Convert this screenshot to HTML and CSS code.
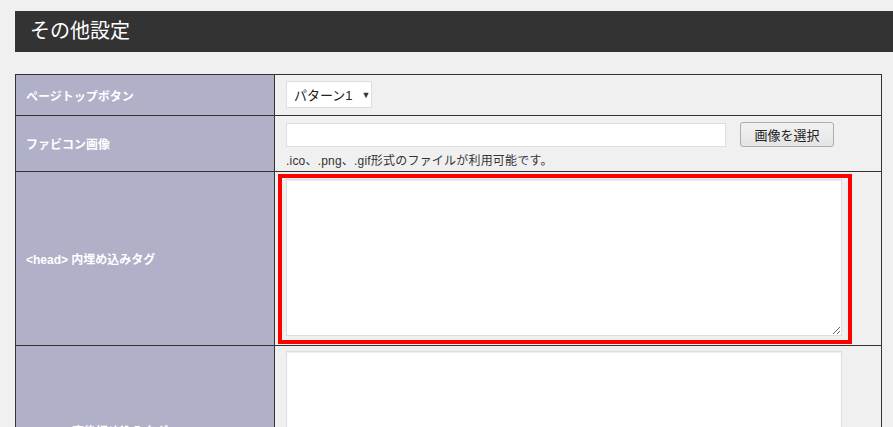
FILE: index.html
```html
<!DOCTYPE html>
<html lang="ja">
<head>
  <meta charset="UTF-8">
  <title>その他設定</title>
  <link rel="stylesheet" href="styles.css">
</head>
<body>

  <div class="settings">
    <!-- Section title bar -->
    <h2 class="section-title">その他設定</h2>

    <table class="form-table">
      <tr class="row-pagetop">
        <th>ページトップボタン</th>
        <td>
          <div class="select-box">
            <span class="select-text">パターン1</span>
            <span class="select-arrow">▼</span>
          </div>
        </td>
      </tr>
      <tr class="row-favicon">
        <th>ファビコン画像</th>
        <td>
          <div class="file-line">
            <input type="text" class="text-input">
            <button type="button" class="pick-btn">画像を選択</button>
          </div>
          <p class="help">.ico、.png、.gif形式のファイルが利用可能です。</p>
        </td>
      </tr>
      <tr class="row-head">
        <th>&lt;head&gt; 内埋め込みタグ</th>
        <td class="marked">
          <textarea class="code-area"></textarea>
          <!-- red annotation box drawn over the field -->
          <div class="highlight"></div>
        </td>
      </tr>
      <tr class="row-body">
        <th>&lt;body&gt; 直後埋め込みタグ</th>
        <td>
          <textarea class="code-area"></textarea>
        </td>
      </tr>
    </table>
  </div>

</body>
</html>
```

FILE: styles.css
```css
/* Page base */
body {
  margin: 0;
  padding: 0;
  background-color: #f0f0f0;
  font-family: "Liberation Sans", "Noto Sans CJK JP", sans-serif;
  color: #333;
  overflow: hidden;
}

.settings {
  padding: 11px 0 0 15px;
}

/* Dark title bar */
.section-title {
  margin: 0;
  height: 41px;
  line-height: 41px;
  padding-left: 15px;
  background-color: #333;
  color: #fff;
  font-size: 20px;
  font-weight: normal;
}

/* Settings table */
.form-table {
  margin-top: 22px;
  width: 867px;
  border-collapse: collapse;
}

.form-table th,
.form-table td {
  border: 1px solid #333;
}

.form-table th {
  width: 238px;
  padding: 0 10px;
  background-color: #b0b0c8;
  color: #fff;
  font-size: 12px;
  font-weight: bold;
  text-align: left;
  vertical-align: middle;
}

.form-table td {
  padding: 0 0 0 11px;
  vertical-align: top;
}

.row-pagetop { height: 41px; }
.row-favicon { height: 56px; }
.row-head    { height: 174px; }
.row-body    { height: 170px; }

/* Fake select */
.select-box {
  display: flex;
  align-items: center;
  gap: 9px;
  box-sizing: border-box;
  width: 86px;
  height: 27px;
  margin-top: 6px;
  padding-left: 7px;
  background: #fff;
  border: 1px solid #ddd;
  font-size: 13px;
  color: #222;
  white-space: nowrap;
}

.select-arrow {
  font-size: 9px;
  color: #333;
}

/* File picker line */
.file-line {
  display: flex;
  align-items: center;
  gap: 14px;
  margin-top: 6px;
}

.text-input {
  box-sizing: border-box;
  width: 440px;
  height: 24px;
  margin: 0;
  background: #fff;
  border: 1px solid #ddd;
}

.pick-btn {
  box-sizing: border-box;
  width: 94px;
  height: 25px;
  padding: 0;
  background: linear-gradient(#f2f2f2, #e4e4e4);
  border: 1px solid #adadad;
  border-radius: 3px;
  font-family: "Liberation Sans", "Noto Sans CJK JP", sans-serif;
  font-size: 13px;
  color: #222;
}

.help {
  margin: 4px 0 0 0;
  font-size: 12px;
  letter-spacing: 0.2px;
  color: #333;
}

/* Big text fields */
.code-area {
  display: block;
  box-sizing: border-box;
  width: 556px;
  height: 157px;
  margin: 7px 0 0 0;
  background: #fff;
  border: 1px solid #ddd;
  box-shadow: inset 0 1px 1px #eee;
}

.row-body .code-area {
  margin-top: 5px;
}

/* Red annotation around the head field */
.marked {
  position: relative;
}

.highlight {
  position: absolute;
  top: 2px;
  left: 3px;
  width: 566px;
  height: 162px;
  border: 4px solid #ff0000;
  pointer-events: none;
}
```
